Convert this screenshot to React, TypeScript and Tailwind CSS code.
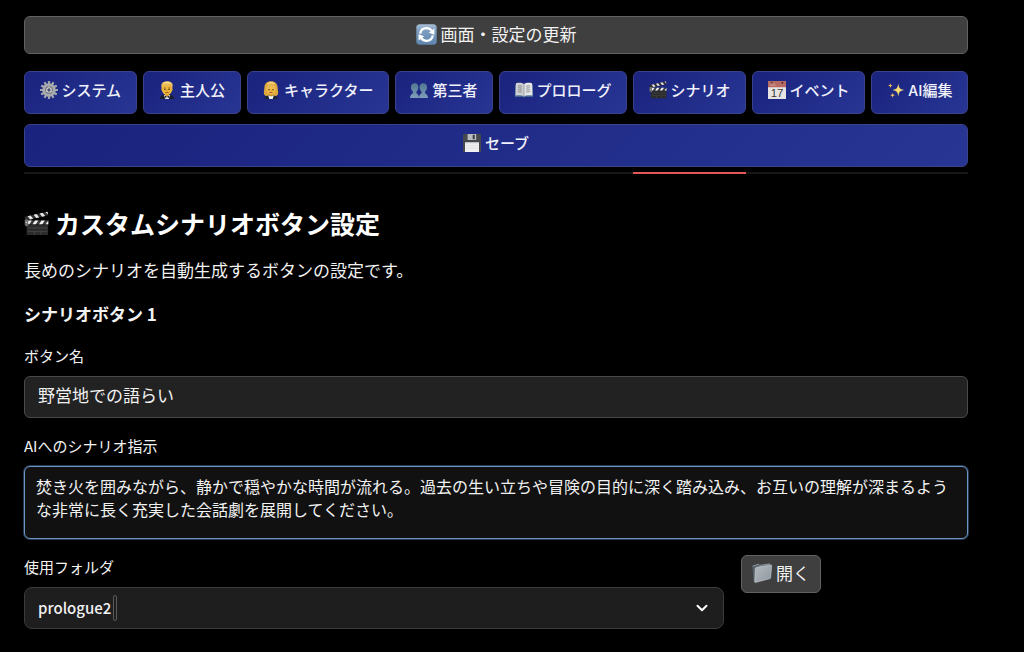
import { useLayoutEffect, useRef, useState } from "react";
import type { ReactNode } from "react";

type IconProps = { className?: string };

function RefreshIcon({ className }: IconProps) {
  return (
    <svg viewBox="0 0 21 21" className={className} aria-hidden>
      <defs>
        <linearGradient id="refresh-bg" x1="0" y1="0" x2="0" y2="1">
          <stop offset="0" stopColor="#a9bfd6" />
          <stop offset="0.3" stopColor="#7f9fc2" />
          <stop offset="1" stopColor="#5f84ad" />
        </linearGradient>
      </defs>
      <rect x="0.3" y="0.3" width="20.4" height="20.4" rx="3.5" fill="url(#refresh-bg)" />
      <g fill="none" stroke="#fff" strokeWidth="2.3">
        <path d="M4.2 9.6C4.8 6 7.6 4.2 10.5 4.2c2.2 0 4 .9 5.2 2.5" />
        <path d="M16.8 11.4c-.6 3.6-3.4 5.4-6.3 5.4-2.2 0-4-.9-5.2-2.5" />
      </g>
      <path d="M18.4 4.6v6.2l-5.6-2z M2.6 16.4v-6.2l5.6 2z" fill="#fff" />
    </svg>
  );
}

const TEETH = [0, 30, 60, 90, 120, 150, 180, 210, 240, 270, 300, 330];

function GearIcon({ className }: IconProps) {
  return (
    <svg viewBox="0 0 18 18" className={className} aria-hidden>
      <g fill="#a5a8ab">
        {TEETH.map((deg) => (
          <rect key={deg} x="7.9" y="0" width="2.2" height="3" rx="0.4" transform={`rotate(${deg} 9 9)`} />
        ))}
      </g>
      <circle cx="9" cy="9" r="5.4" fill="#777b81" stroke="#a9acaf" strokeWidth="2.8" />
      <g stroke="#a4a7aa" strokeWidth="1.2">
        <path d="M9 9V4 M9 9l4.6 2.6 M9 9l-4.6 2.6" />
      </g>
      <circle cx="9" cy="9" r="2.2" fill="#4c5068" stroke="#d3d5d7" strokeWidth="1.1" />
    </svg>
  );
}

function ManIcon({ className }: IconProps) {
  return (
    <svg viewBox="0 0 18 18" className={className} aria-hidden>
      <path d="M2 18c.1-2.600 1.500-3.900 4.400-4.200h5.200c2.900.3 4.300 1.600 4.400 4.200z" fill="#1b1f2a" />
      <path d="M6 14h6l-1.200 4H7.200z" fill="#f0f1f3" />
      <path d="M7 11.500h4v2.700l-2 1.200-2-1.200z" fill="#c88a22" />
      <path d="M4.300 4h9.400l.4 3.200c.8.2.8 2 0 2.300-.5 2.600-2.700 4.600-5.100 4.600s-4.600-2-5.100-4.600c-.8-.3-.8-2.100 0-2.300z" fill="#eeb63c" />
      <path d="M3.800 7.600C2.400 3.400 4 .8 7.200.4c3.600-.6 7.800.6 7.500 4.200-.1 1.200-.3 2.100-.5 3h-.7c0-1.600-.4-2.600-1.200-3.300-2.200.6-4.800.4-6.500 0-.8.700-1.200 1.700-1.200 3.300z" fill="#e9bd5b" />
      <path d="M4.600 2.600C6.800.5 11.800.3 13.700 2.700c-2.800-.5-6.300-.6-9.100-.1z" fill="#ffe6a2" />
      <path d="M5.800 7h2M10.200 7h2" stroke="#7c4f12" strokeWidth="0.700" />
      <circle cx="6.900" cy="8.400" r="0.700" fill="#3c290c" />
      <circle cx="11.100" cy="8.400" r="0.700" fill="#3c290c" />
      <path d="M9 8.600v1.500" stroke="#c78a22" strokeWidth="0.800" />
      <path d="M7.300 11.600h3.400" stroke="#94571b" strokeWidth="0.900" />
      <path d="M6.900 14.800l2.100.9 2.100-.9v2.200l-2.100-.9-2.100.9z" fill="#15171c" />
    </svg>
  );
}

function WomanIcon({ className }: IconProps) {
  return (
    <svg viewBox="0 0 18 18" className={className} aria-hidden>
      <path d="M9 .3C4.800.3 2.500 2.700 2.400 6.500 2.300 9 1.500 11 2 13c.5 2 3 2.400 4.800 1.800h4.400c1.800.6 4.300.2 4.800-1.800.5-2-.3-4-.4-6.500C15.500 2.700 13.200.3 9 .3z" fill="#dda63b" />
      <path d="M2.600 18c.1-2 1.400-3.200 3.800-3.500h5.200c2.400.3 3.700 1.500 3.800 3.500z" fill="#1e2330" />
      <path d="M6.200 14.400h5.600L10.700 18H7.300z" fill="#f0f1f3" />
      <path d="M7.300 12h3.400v2.400L9 15.500l-1.700-1.100z" fill="#c88a22" />
      <ellipse cx="9" cy="8.300" rx="4.500" ry="5.200" fill="#f2bd45" />
      <path d="M4.100 8.900C3.700 5 5.800 3 9.600 2.500c3.200.7 4.700 2.900 4.300 6.400-1.700-.8-3.200-2.300-4-4C9 6.700 6.700 8.300 4.100 8.900z" fill="#e7b654" />
      <path d="M4.700 2.900c2.100-2.100 6.500-2.100 8.600 0-2.700-.8-5.900-.8-8.600 0z" fill="#ffe9ae" />
      <circle cx="7" cy="8.800" r="0.700" fill="#3c290c" />
      <circle cx="11" cy="8.800" r="0.700" fill="#3c290c" />
      <path d="M9 9v1.300" stroke="#c78a22" strokeWidth="0.800" />
      <path d="M7.300 11.500h3.400" stroke="#a9413a" strokeWidth="0.900" />
    </svg>
  );
}

function PeopleIcon({ className }: IconProps) {
  return (
    <svg viewBox="0 0 18 18" className={className} aria-hidden>
      <defs>
        <linearGradient id="people-fill" x1="0" y1="0" x2="0" y2="1">
          <stop offset="0" stopColor="#50788f" />
          <stop offset="1" stopColor="#7e9dbb" />
        </linearGradient>
      </defs>
      <g fill="url(#people-fill)">
        <path d="M4.700 2.200C2.200 2.200.8 4 1 6.500c.2 2 .9 3.400 2 4.200v1.600C1.600 12.900.2 13.800 0 17h9c-.2-3.200-1.300-4.100-2.600-4.700v-1.600c1.100-.8 1.800-2.200 2-4.200.2-2.500-1.200-4.300-3.700-4.300z" />
        <path d="M13.300 2.200c-2.500 0-3.900 1.800-3.700 4.300.2 2 .9 3.400 2 4.200v1.600c-1.500.6-2.400 1.500-2.600 4.700h9c-.2-3.200-1.600-4.100-3-4.700v-1.600c1.100-.8 1.800-2.200 2-4.200.2-2.500-1.200-4.300-3.700-4.300z" />
      </g>
    </svg>
  );
}

function BookIcon({ className }: IconProps) {
  return (
    <svg viewBox="0 0 18 18" className={className} aria-hidden>
      <path d="M0 3.500h18v12.300h-7.500L9 16.500l-1.500-.7H0z" fill="#52779c" />
      <path d="M1 2.300c3-.8 6-.6 8 .7v12.300c-2-1-5-1.200-8.400-.7z" fill="#cfd0d3" />
      <path d="M17 2.300c-3-.8-6-.6-8 .7v12.300c2-1 5-1.200 8.400-.7z" fill="#e8e8e9" />
      <path d="M9 3v12.300" stroke="#8e9095" strokeWidth="0.8" />
      <g stroke="#b4b6ba" strokeWidth="0.5">
        <path d="M2.500 5c1.800-.3 3.400-.2 5 .3M2.500 7c1.800-.3 3.400-.2 5 .3M2.400 9c1.800-.3 3.400-.2 5.100.3M2.300 11c1.800-.3 3.400-.2 5.200.3" />
        <path d="M15.500 5c-1.800-.3-3.400-.2-5 .3M15.500 7c-1.800-.3-3.400-.2-5 .3M15.600 9c-1.800-.3-3.400-.2-5.100.3M15.700 11c-1.800-.3-3.400-.2-5.200.3" />
      </g>
    </svg>
  );
}

function ClapperIcon({ className }: IconProps) {
  return (
    <svg viewBox="0 0 25 25" className={className} aria-hidden>
      <path d="M.6 5.800L23.500.7l.9 3.600L1.500 9.600z" fill="#303030" />
      <path d="M3.600 5.200l3-.7 2.600 3.300-3 .7zM9.600 3.800l3-.7 2.600 3.300-3 .7zM15.600 2.500l3-.7 2.600 3.200-3 .7zM21.300 1.200l2.200-.5.7 2.900z" fill="#e6e6e6" />
      <path d="M.8 9.400h23.500v4H.8z" fill="#3a3a3a" />
      <path d="M4.500 9.400h3.300l-2.600 4H1.900zM11 9.400h3.300l-2.600 4H8.400zM17.500 9.400h3.300l-2.600 4h-3.300zM24.300 9.400v3.700l-.2.300h-2.700z" fill="#f0f0f0" />
      <path d="M2.600 13.400h21.500v10.700H3.600c-.6 0-1-.4-1-1z" fill="#2b2b2b" />
      <path d="M.8 8.500h3.400v6.300l-1.600.7-1.800-1.300z" fill="#707070" />
      <g stroke="#555" strokeWidth="0.6">
        <path d="M3.500 16.900h20M3.500 20.400h20M10.400 20.400v3.700M17 20.400v3.700" />
      </g>
      <circle cx="2.400" cy="11.400" r="0.700" fill="#d0d0d0" />
    </svg>
  );
}

function CalendarIcon({ className }: IconProps) {
  return (
    <svg viewBox="0 0 19 19" className={className} aria-hidden>
      <rect x="0" y="0" width="19" height="19" rx="0.600" fill="#e7e5e4" />
      <path d="M0 .6C0 .3.300 0 .6 0h17.800c.3 0 .6.300.6.600V6.500H0z" fill="#b56a63" />
      <circle cx="3.900" cy="1.900" r="0.900" fill="#3d2030" />
      <circle cx="15.200" cy="1.900" r="0.900" fill="#3d2030" />
      <text x="1.500" y="5.800" fontSize="4" fill="#e2b9b4" fontFamily="Liberation Sans, sans-serif">JUL</text>
      <text x="9.500" y="16.900" fontSize="12" textAnchor="middle" fill="#3a3836" fontFamily="Liberation Sans, sans-serif">17</text>
    </svg>
  );
}

function SparklesIcon({ className }: IconProps) {
  return (
    <svg viewBox="0 0 18 18" className={className} aria-hidden>
      <path d="M11.300 2.500c.7 4.600 1.200 5.500 5.700 6.500-4.500 1-5 1.900-5.700 6.500-.7-4.600-1.200-5.500-5.700-6.500 4.500-1 5-1.900 5.700-6.500z" fill="#f8dc74" />
      <path d="M3.400 2c.3 1.900.7 2.300 2.600 2.600-1.900.3-2.300.7-2.600 2.600C3.100 5.300 2.700 4.900.8 4.600 2.700 4.300 3.100 3.900 3.400 2z" fill="#efc15d" />
      <path d="M5.600 11.600c.3 2 .7 2.300 2.500 2.600-1.800.3-2.200.7-2.500 2.700-.3-2-.7-2.400-2.500-2.700 1.800-.3 2.200-.6 2.500-2.600z" fill="#efc15d" />
    </svg>
  );
}

function FloppyIcon({ className }: IconProps) {
  return (
    <svg viewBox="0 0 18 18" className={className} aria-hidden>
      <path d="M0 .8C0 .3.300 0 .8 0h16.400c.5 0 .8.300.8.800V18H.8c-.5 0-.8-.300-.8-.800z" fill="#46484d" />
      <path d="M4.600 0h8.600v6H4.600z" fill="#b9bcbf" />
      <path d="M9.700.8h2v4.400h-2z" fill="#3b3d42" />
      <path d="M2 8h14v10H2z" fill="#eef0f1" />
      <path d="M2 8h14v1.200H2z" fill="#b8c2c8" />
      <path d="M3.200 11.600h11.600M3.200 14.200h11.600" stroke="#d5d9dc" strokeWidth="0.600" />
    </svg>
  );
}

function FolderIcon({ className }: IconProps) {
  return (
    <svg viewBox="0 0 20 20" className={className} aria-hidden>
      <defs>
        <linearGradient id="folder-front" x1="0" y1="0" x2="1" y2="1">
          <stop offset="0" stopColor="#b4babf" />
          <stop offset="1" stopColor="#8e969e" />
        </linearGradient>
      </defs>
      <path d="M.5 3.200l5.800-2 1.500 1.200L18 .8l.6 2.400L3 19.400l-1.300-.5z" fill="#59626b" />
      <path d="M.5 3.200l5.800-2 1.500 1.200L18 .8" fill="none" stroke="#a6b0b8" strokeWidth="0.700" />
      <path d="M3.400 5.300c0-.4.300-.8.800-.9L19 1.900c.5-.1.800.2.8.7l-1.200 12.200c0 .5-.3.800-.8.900L3.600 19.400c-.5.100-.9-.100-.9-.600z" fill="url(#folder-front)" stroke="#d2d8dc" strokeWidth="0.500" />
    </svg>
  );
}

const TABS: { id: string; label: string; icon: ReactNode }[] = [
  { id: "system", label: "システム", icon: <GearIcon className="size-[18px]" /> },
  { id: "hero", label: "主人公", icon: <ManIcon className="size-[18px]" /> },
  { id: "character", label: "キャラクター", icon: <WomanIcon className="size-[18px]" /> },
  { id: "third", label: "第三者", icon: <PeopleIcon className="size-[18px]" /> },
  { id: "prologue", label: "プロローグ", icon: <BookIcon className="size-[18px]" /> },
  { id: "scenario", label: "シナリオ", icon: <ClapperIcon className="size-[18px]" /> },
  { id: "event", label: "イベント", icon: <CalendarIcon className="size-[18px]" /> },
  { id: "ai", label: "AI編集", icon: <SparklesIcon className="size-[18px]" /> },
  { id: "save", label: "セーブ", icon: <FloppyIcon className="size-[18px]" /> },
];

function TabBar() {
  const [active, setActive] = useState("scenario");
  const [bar, setBar] = useState({ left: 0, width: 0 });
  const listRef = useRef<HTMLDivElement>(null);

  useLayoutEffect(() => {
    const measure = () => {
      const el = listRef.current?.querySelector<HTMLElement>('[aria-selected="true"]');
      if (el) setBar({ left: el.offsetLeft, width: el.offsetWidth });
    };
    measure();
    window.addEventListener("resize", measure);
    return () => window.removeEventListener("resize", measure);
  }, [active]);

  return (
    <div className="relative mt-[17px] border-b-2 border-[#171717] pb-[5px]">
      <div ref={listRef} role="tablist" className="flex flex-wrap gap-x-1.5 gap-y-[10px]">
        {TABS.map((tab) => (
          <button
            key={tab.id}
            type="button"
            role="tab"
            aria-selected={tab.id === active}
            onClick={() => setActive(tab.id)}
            className={`flex grow items-center justify-center gap-1 rounded-md border border-[#3a428c] bg-linear-135 from-[#1a237e] to-[#283593] px-3.5 pt-[7px] pb-3 text-[15px] leading-[22px] font-medium whitespace-nowrap text-[#f0f1fa] ${
              tab.id === "save" ? "w-full" : ""
            }`}
          >
            {tab.icon}
            {tab.label}
          </button>
        ))}
      </div>
      <span className="absolute -bottom-0.5 h-0.5 bg-[#e3585a]" style={{ left: bar.left, width: bar.width }} />
    </div>
  );
}

export default function App() {
  return (
    <div className="min-h-screen bg-black pt-4 pr-14 pb-6 pl-6 font-['Noto_Sans_CJK_JP',sans-serif] text-[#f2f2f2]">
      <button
        type="button"
        className="flex w-full items-center justify-center gap-1 rounded-md border border-[#626262] bg-[#3f3f3f] px-3 pt-[5px] pb-[7px] text-[17px] leading-6"
      >
        <RefreshIcon className="size-[21px]" />
        画面・設定の更新
      </button>

      <TabBar />

      <main className="mt-8">
        <h1 className="flex items-center gap-1.5 text-[25px] leading-[34px] font-bold text-white">
          <ClapperIcon className="size-[25px]" />
          カスタムシナリオボタン設定
        </h1>
        <p className="mt-[18px] text-[17px] leading-6">長めのシナリオを自動生成するボタンの設定です。</p>
        <h2 className="mt-5 text-[17px] leading-6 font-bold">シナリオボタン 1</h2>

        <label htmlFor="button-name" className="mt-[18px] block text-[15px] leading-6">
          ボタン名
        </label>
        <input
          id="button-name"
          type="text"
          defaultValue="野営地での語らい"
          className="mt-2 block h-[42px] w-full rounded-md border border-[#4a4a4a] bg-[#222] px-[13px] pb-1.5 text-[17px] outline-none"
        />

        <label htmlFor="scenario-prompt" className="mt-4 block text-[15px] leading-6">
          AIへのシナリオ指示
        </label>
        <textarea
          id="scenario-prompt"
          rows={2}
          defaultValue="焚き火を囲みながら、静かで穏やかな時間が流れる。過去の生い立ちや冒険の目的に深く踏み込み、お互いの理解が深まるような非常に長く充実した会話劇を展開してください。"
          className="mt-2 block h-[73px] w-full resize-none rounded-md border border-[#6d94c4] bg-[#111] px-[11px] py-2 text-base leading-[23px] ring-1 ring-[#24384f] outline-none"
        />

        <div className="mt-4 grid grid-cols-[37fr_12fr] items-start gap-[17px]">
          <div>
            <label htmlFor="folder" className="block text-[15px] leading-6">
              使用フォルダ
            </label>
            <div className="relative mt-2">
              <select
                id="folder"
                className="block h-[42px] w-full appearance-none rounded-lg border border-[#3b3b3b] bg-[#1e1e1e] px-[13px] text-[15px] font-medium outline-none"
              >
                <option>prologue2</option>
              </select>
              <span className="pointer-events-none absolute top-2 left-[89px] h-[26px] w-1 rounded-xs border border-[#5a5a5a]" />
              <svg
                viewBox="0 0 12 8"
                className="pointer-events-none absolute top-[17px] right-4 h-2 w-3"
                fill="none"
                stroke="#fff"
                strokeWidth="2"
                strokeLinecap="round"
                strokeLinejoin="round"
                aria-hidden
              >
                <path d="M1.500 1.700L6 6.200l4.500-4.500" />
              </svg>
            </div>
          </div>
          <button
            type="button"
            className="flex items-center gap-1 justify-self-start rounded-md border border-[#626262] bg-[#3f3f3f] px-2.5 pt-[5px] pb-[7px] text-[17px] leading-6 whitespace-nowrap"
          >
            <FolderIcon className="size-5" />
            開く
          </button>
        </div>
      </main>
    </div>
  );
}
